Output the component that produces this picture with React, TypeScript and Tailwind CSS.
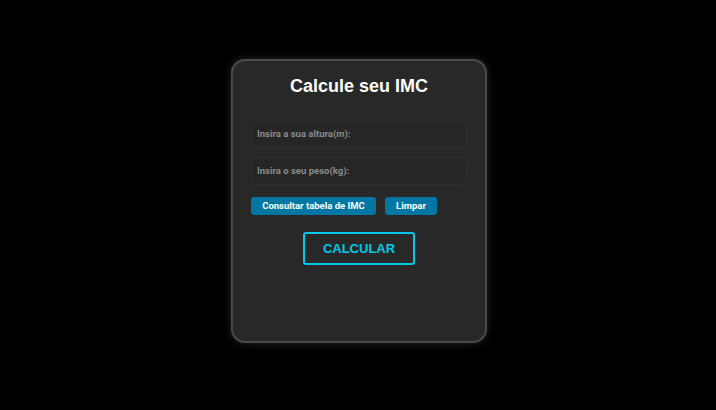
import React from "react";

export default function App() {
  return (
    <div className="w-[716px] h-[410px] bg-black flex items-center justify-center" style={{ fontFamily: '"Liberation Sans", Arial, sans-serif' }}>
      <div className="w-[256px] h-[284px] -mt-[8px] ml-[2px] rounded-[14px] border-2 border-[#4a4a4a] bg-[#282828] shadow-[0_0_8px_rgba(255,255,255,0.15)] px-[18px] pt-[14px] flex flex-col">
        <h1 className="text-center text-white font-bold text-[18px] leading-[22px]">Calcule seu IMC</h1>
        <div className="mt-[24px] h-[27px] rounded-[5px] border border-[#2f2f2f] bg-[#262626] flex items-center px-[5px]">
          <span className="text-[#8a8a8a] font-bold text-[9.5px]" style={{ fontFamily: 'Roboto, sans-serif' }}>Insira a sua altura(m):</span>
        </div>
        <div className="mt-[10px] h-[27px] rounded-[5px] border border-[#2f2f2f] bg-[#262626] flex items-center px-[5px]">
          <span className="text-[#8a8a8a] font-bold text-[9.5px]" style={{ fontFamily: 'Roboto, sans-serif' }}>Insira o seu peso(kg):</span>
        </div>
        <div className="mt-[12px] flex gap-[9px]">
          <button className="h-[18px] w-[125px] rounded-[3px] bg-[#0077a3] text-white font-bold text-[9.5px]" style={{ fontFamily: 'Roboto, sans-serif' }}>Consultar tabela de IMC</button>
          <button className="h-[18px] w-[52px] rounded-[3px] bg-[#0077a3] text-white font-bold text-[9.5px]" style={{ fontFamily: 'Roboto, sans-serif' }}>Limpar</button>
        </div>
        <div className="mt-[17px] flex justify-center">
          <button className="w-[112px] h-[33px] rounded-[3px] border-2 border-[#00c8e8] text-[#00c8e8] font-bold text-[13px]">CALCULAR</button>
        </div>
      </div>
    </div>
  );
}
